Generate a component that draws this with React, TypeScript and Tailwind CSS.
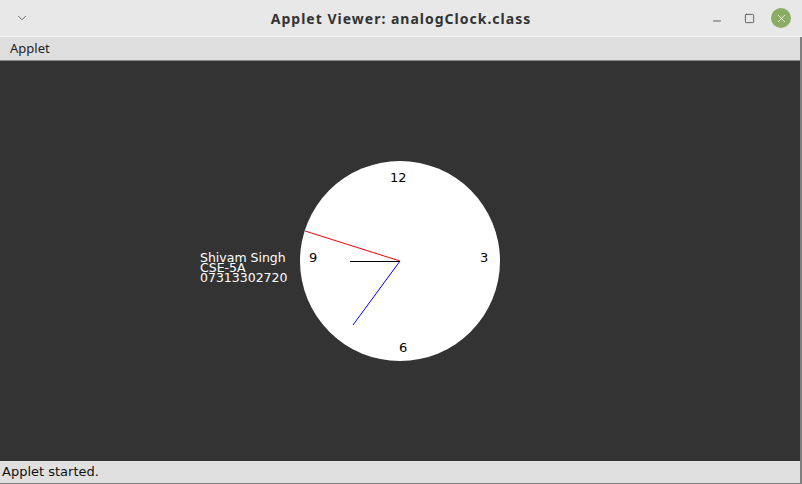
import {Minus, Square, X, ChevronDown} from "lucide-react";

const sans = "font-['Noto_Sans','DejaVu_Sans',sans-serif]";
const dialog = "font-['DejaVu_Sans','Liberation_Sans',sans-serif]";

function TitleBar() {
    return (
        <div className="h-[37px] grid grid-cols-[1fr_auto_1fr] items-center bg-[#e8e8e8] rounded-tr-[8px] border-b border-[#f4f4f4]">
            <div className="w-[44px] flex justify-center">
                <ChevronDown size={14} strokeWidth={1.5} className="text-[#555]"/>
            </div>
            <span className={`text-center text-[14px] tracking-[1px] font-bold text-[#333] ${sans}`}>
                Applet Viewer: analogClock.class
            </span>
            <div className="flex items-center justify-end gap-[12px] pr-[11px]">
                <div className="w-[20px] flex justify-center">
                    <Minus size={12} strokeWidth={1.5} className="text-[#333] mt-[6px]"/>
                </div>
                <div className="w-[20px] flex justify-center">
                    <Square size={11} strokeWidth={1.6} className="text-[#333]"/>
                </div>
                <div className="w-[20px] h-[20px] rounded-full bg-[#8bac64] flex items-center justify-center">
                    <X size={13} strokeWidth={1.4} className="text-white"/>
                </div>
            </div>
        </div>
    );
}

function ClockCanvas() {
    // applet area, drawn like Graphics in paint()
    return (
        <div className="h-[400px] bg-[#333333]">
            <svg width="800" height="400" className={dialog}>
                <circle cx="400" cy="200" r="100" fill="#ffffff"/>
                <text x="390" y="121" fontSize="13" fill="#000">12</text>
                <text x="480" y="201" fontSize="13" fill="#000">3</text>
                <text x="309" y="201" fontSize="13" fill="#000">9</text>
                <text x="399" y="291" fontSize="13" fill="#000">6</text>
                <line x1="305" y1="170" x2="400" y2="200" stroke="#ff0000" strokeWidth="1"/>
                <line x1="353" y1="264" x2="400" y2="200" stroke="#0000ff" strokeWidth="1"/>
                <line x1="350" y1="200.5" x2="400" y2="200.5" stroke="#000" strokeWidth="1"/>
                <text x="200" y="201" fontSize="12.5" fill="#fff">Shivam Singh</text>
                <text x="200" y="211" fontSize="12.5" fill="#fff">CSE-5A</text>
                <text x="200" y="221" fontSize="12.5" fill="#fff">07313302720</text>
            </svg>
        </div>
    );
}

export default function App() {
    return (
        <div className="w-[802px] h-[484px] flex flex-col bg-[#7f7f7f] pr-[2px] pb-[1px] overflow-hidden">
            <div className="bg-[#e8e8e8] -mr-[2px]">
                <TitleBar/>
            </div>
            <div className={`h-[24px] bg-[#dedede] border-b border-[#888] flex items-center px-[10px] text-[13px] text-[#222] ${sans}`}>
                Applet
            </div>
            <ClockCanvas/>
            <div className={`h-[22px] bg-[#e0e0e0] flex items-center px-[2px] text-[13px] text-[#111] ${dialog}`}>
                Applet started.
            </div>
        </div>
    );
}
